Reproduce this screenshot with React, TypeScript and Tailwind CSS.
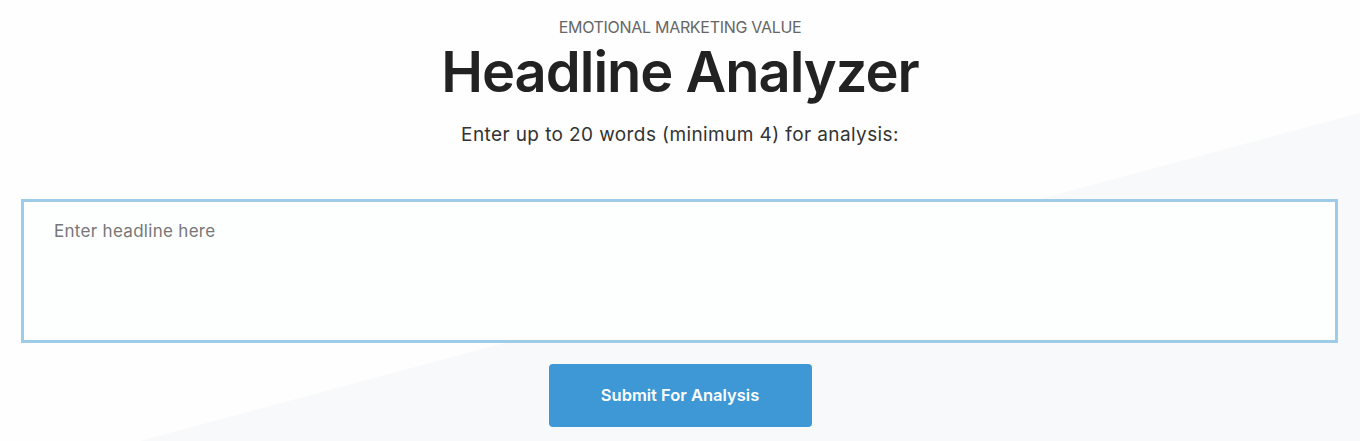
import React from 'react'

export default function App() {
  return (
    <div className="relative h-[441px] w-full overflow-hidden bg-[#fefefe] font-['Inter','Noto_Sans',sans-serif]">
      <div className="absolute inset-0 bg-[#f8f9fa] [clip-path:polygon(10.3%_100%,100%_25.6%,100%_100%)]" />
      <div className="relative flex flex-col items-center pt-[17px]">
        <p className="text-[16px] leading-5 tracking-[-0.3px] text-[#666]">EMOTIONAL MARKETING VALUE</p>
        <h1 className="mt-[2px] text-[56px] font-semibold leading-[66px] tracking-[-1px] text-[#222]">
          Headline Analyzer
        </h1>
        <p className="mt-[18px] text-[19px] leading-6 tracking-[0.4px] text-[#333]">
          Enter up to 20 words (minimum 4) for analysis:
        </p>
        <div className="mt-[52px] w-full px-[21px] pr-[22px]">
          <textarea
            placeholder="Enter headline here"
            className="block h-[144px] w-full resize-none border-[3px] border-[#9ecbe8] bg-[#fdfefe] px-[30px] py-[17px] text-[17px] tracking-[0.3px] text-[#333] outline-none placeholder:text-[#777]"
          />
        </div>
        <button className="mt-[21px] h-[63px] w-[263px] rounded-[4px] bg-[#3d98d5] text-[16.5px] font-semibold text-white">
          Submit For Analysis
        </button>
      </div>
    </div>
  )
}
